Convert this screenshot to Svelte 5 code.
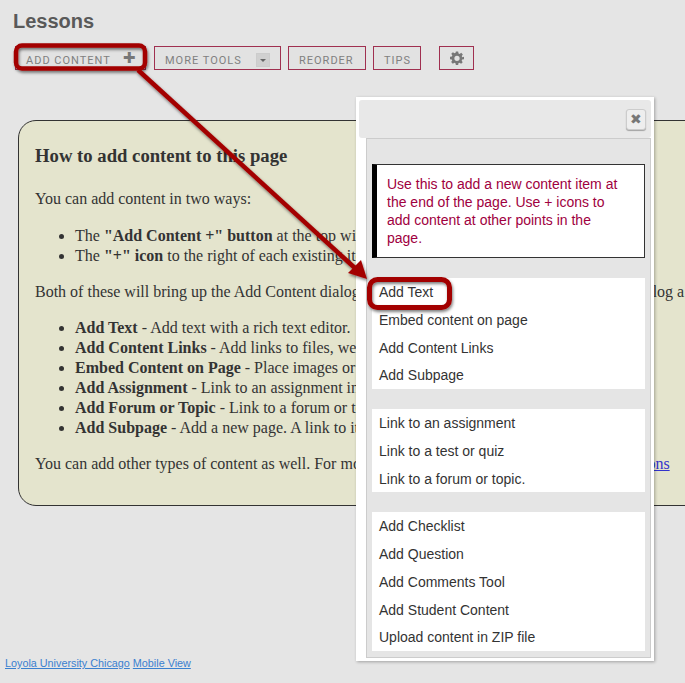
<script lang="ts">
  const MENU_GROUPS = [
    ["Add Text", "Embed content on page", "Add Content Links", "Add Subpage"],
    ["Link to an assignment", "Link to a test or quiz", "Link to a forum or topic."],
    ["Add Checklist", "Add Question", "Add Comments Tool", "Add Student Content", "Upload content in ZIP file"],
  ];

  const ADD_ITEMS = [
    ["Add Text", "Add text with a rich text editor."],
    ["Add Content Links", "Add links to files, websites and other items on the site."],
    ["Embed Content on Page", "Place images or other media directly on the page."],
    ["Add Assignment", "Link to an assignment in the course site for students."],
    ["Add Forum or Topic", "Link to a forum or topic in the discussion tool."],
    ["Add Subpage", "Add a new page. A link to it will appear on this page."],
  ];
</script>

<div class="page">
  <h1>Lessons</h1>

  <div class="toolbar">
    <button class="tool add">ADD CONTENT <span class="plus">✚</span></button>
    <button class="tool more">MORE TOOLS <span class="caret"></span></button>
    <button class="tool reorder">REORDER</button>
    <button class="tool tips">TIPS</button>
    <button class="tool gear" aria-label="Settings">
      <svg viewBox="0 0 24 24" width="14" height="14">
        <path fill="#777" fill-rule="evenodd" d="M10 1h4l.6 3.2 1.9.8 2.7-1.8 2.8 2.8-1.8 2.7.8 1.9L24 10v4l-3.2.6-.8 1.9 1.8 2.7-2.8 2.8-2.7-1.8-1.9.8L14 24h-4l-.6-3.2-1.9-.8-2.7 1.8-2.8-2.8 1.8-2.7-.8-1.9L0 14v-4l3.2-.6.8-1.9-1.8-2.7 2.8-2.8 2.7 1.8 1.9-.8zM12 8a4.5 4.5 0 1 0 0 9 4.5 4.5 0 0 0 0-9z"/>
      </svg>
    </button>
  </div>

  <section class="card">
    <h2>How to add content to this page</h2>
    <p class="intro">You can add content in two ways:</p>
    <ul>
      <li>The <b>"Add Content +" button</b> at the top with the other tools on the page</li>
      <li>The <b>"+" icon</b> to the right of each existing item on the page</li>
    </ul>
    <p>Both of these will bring up the Add Content dialog. Pick a type of content you want from the dialog a</p>
    <ul>
      {#each ADD_ITEMS as [name, desc]}
        <li><b>{name}</b> - {desc}</li>
      {/each}
    </ul>
    <p>You can add other types of content as well. For more detail about each of them, see <a href="#instructions">the instructions</a></p>
  </section>

  <footer>
    <a href="#luc">Loyola University Chicago</a>
    <a href="#mobile">Mobile View</a>
  </footer>

  <div class="dialog">
    <div class="titlebar">
      <button class="close" aria-label="Close">✖</button>
    </div>
    <div class="body">
      <div class="note">Use this to add a new content item at the end of the page. Use + icons to add content at other points in the page.</div>
      {#each MENU_GROUPS as group}
        <ul class="menu">
          {#each group as item}
            <li>{item}</li>
          {/each}
        </ul>
      {/each}
    </div>
  </div>

  <!-- annotation layer drawn over the screenshot -->
  <svg class="callout" width="685" height="683" viewBox="0 0 685 683">
    <defs>
      <filter id="shadow" x="-10%" y="-10%" width="120%" height="120%">
        <feDropShadow dx="1" dy="2" stdDeviation="1.5" flood-color="#000" flood-opacity="0.5" />
      </filter>
    </defs>
    <g filter="url(#shadow)" fill="none" stroke="#a30000">
      <rect x="16" y="45.5" width="129" height="23" rx="6" stroke-width="4.5" />
      <line x1="138" y1="70" x2="356" y2="269" stroke-width="4.5" />
      <path d="M367 279l-19-6 13-13z" fill="#a30000" stroke="none" />
      <rect x="369.5" y="279.5" width="80" height="28" rx="8" stroke-width="5" />
    </g>
  </svg>
</div>

<style>
  :global(body) {
    background: #e5e5e5;
    overflow: hidden;
  }

  .page {
    position: relative;
    width: 685px;
    height: 683px;
    overflow: hidden;
    font-family: "Liberation Sans", Arial, sans-serif;
  }

  h1 {
    margin: 0;
    padding: 10px 0 0 13px;
    font-size: 20px;
    line-height: 23px;
    font-weight: bold;
    color: #595959;
  }

  .toolbar {
    display: flex;
    align-items: stretch;
    gap: 7px;
    height: 24px;
    margin: 13px 0 0 15px;
  }

  .tool {
    display: flex;
    align-items: center;
    box-sizing: border-box;
    padding: 4px 0 0 10px;
    background: #e2e2e2;
    border: 1px solid #a03050;
    font-family: Roboto, "Liberation Sans", Arial, sans-serif;
    font-size: 11px;
    letter-spacing: 1px;
    color: #808080;
  }

  .add { width: 131px; gap: 12px; margin-right: 1px; }
  .more { width: 127px; gap: 14px; }
  .reorder { width: 78px; }
  .tips { width: 48px; }
  .gear { width: 35px; margin-left: 11px; padding: 0; justify-content: center; }

  .plus {
    margin-top: -4px;
    font-size: 15px;
    line-height: 1;
    letter-spacing: 0;
    color: #777;
  }

  .caret {
    width: 14px;
    height: 14px;
    background: #d0d0d0;
    border: 1px solid #ccc;
    box-sizing: border-box;
    position: relative;
  }

  .caret::after {
    content: "";
    position: absolute;
    left: 3px;
    top: 5px;
    border: 3px solid transparent;
    border-top: 3px solid #666;
  }

  .card {
    box-sizing: border-box;
    width: 900px;
    height: 386px;
    margin: 50px 0 0 18px;
    padding: 1px 16px 0;
    background: #e4e4cd;
    border: 1px solid #333;
    border-radius: 18px;
    font-family: "Liberation Serif", "Times New Roman", serif;
    font-size: 16px;
    line-height: 20px;
    color: #333;
    white-space: nowrap;
  }

  .card h2 {
    margin: 23px 0 22px;
    font-size: 18.7px;
    line-height: 22px;
    font-weight: bold;
  }

  .card p {
    margin: 16px 0;
  }

  .card .intro {
    margin-bottom: 17px;
  }

  .card ul {
    margin: 16px 0;
    padding-left: 40px;
  }

  .card li b {
    font-weight: bold;
  }

  .card a {
    color: #3333cc;
  }

  footer {
    position: absolute;
    left: 5px;
    top: 656px;
    font-size: 10.8px;
    line-height: 14px;
  }

  footer a {
    color: #3a80d0;
  }

  .dialog {
    position: absolute;
    left: 356px;
    top: 97px;
    box-sizing: border-box;
    width: 298px;
    height: 564px;
    padding: 3px;
    background: #fff;
    box-shadow: 1px 1px 3px rgba(0, 0, 0, 0.3);
  }

  .titlebar {
    position: relative;
    height: 38px;
    background: #e8e8e8;
    border-radius: 3px;
  }

  .close {
    position: absolute;
    right: 5px;
    top: 9px;
    width: 20px;
    height: 21px;
    padding: 0;
    background: #eee;
    border: 1px solid #ccc;
    border-radius: 3px;
    box-shadow: 0 1px 1px rgba(0, 0, 0, 0.3);
    font-size: 14px;
    line-height: 17px;
    color: #777;
  }

  .body {
    box-sizing: border-box;
    height: 520px;
    margin-left: 7px;
    padding: 25px 5px 0;
    background: #e5e5e5;
    border: 1px solid #ccc;
  }

  .note {
    box-sizing: border-box;
    height: 94px;
    padding: 10px 18px 0 10px;
    background: #fff;
    border: 1px solid #333;
    border-left: 5px solid #000;
    font-size: 14px;
    line-height: 18px;
    color: #a00040;
  }

  .menu {
    margin: 20px 0 0;
    padding: 0;
    list-style: none;
    background: #fff;
  }

  .menu li {
    padding-left: 7px;
    height: 27.75px;
    font-size: 14px;
    line-height: 29.75px;
    color: #333;
  }

  .callout {
    position: absolute;
    left: 0;
    top: 0;
    pointer-events: none;
  }
</style>
